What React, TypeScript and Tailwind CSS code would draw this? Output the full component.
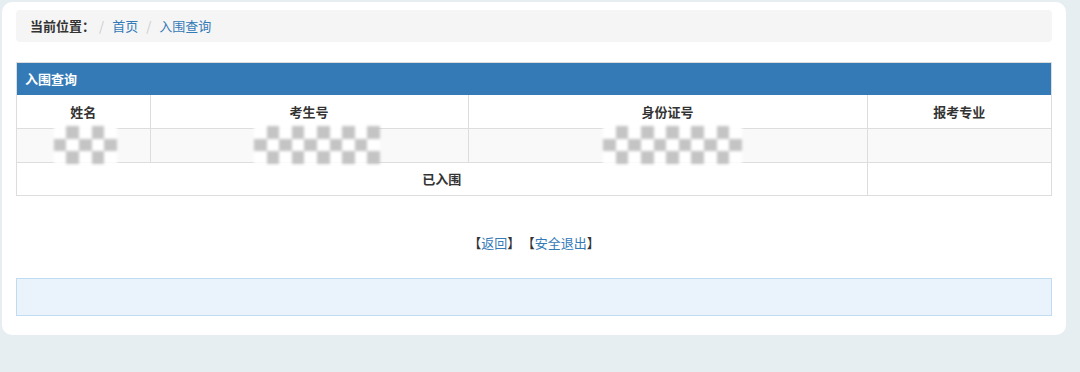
import React from 'react';

const font = { fontFamily: '"Noto Sans CJK SC", "Liberation Sans", sans-serif' };

function Masked({ cols, shift = 0 }: { cols: number; shift?: number }) {
  const rows = [0, 1, 2];
  return (
    <div className="inline-flex flex-col blur-[1.4px]" style={{ marginLeft: shift }}>
      {rows.map((r) => (
        <div key={r} className="flex">
          {Array.from({ length: cols }).map((_, c) => (
            <div
              key={c}
              className={(r + c) % 2 === 0 ? 'h-[12.5px] w-[12.6px] bg-white' : 'h-[12.5px] w-[12.6px] bg-[#c4c4c4]'}
            />
          ))}
        </div>
      ))}
    </div>
  );
}

export default function App() {
  return (
    <div className="h-[372px] w-[1080px] overflow-hidden bg-[#e6eef1] pt-[2px] pl-[2px] text-[13px] text-[#333]" style={font}>
      <div className="w-[1064px] rounded-[10px] bg-white px-[14px] pt-2 pb-[19px]">
        {/* breadcrumb */}
        <div className="flex h-8 items-center rounded bg-[#f5f5f5] px-[14px]">
          <span className="font-bold text-[#333]">当前位置：</span>
          <span className="pr-[8px] pl-[4px] text-[#ccc]">/</span>
          <a className="text-[#337ab7]">首页</a>
          <span className="px-[8px] text-[#ccc]">/</span>
          <a className="text-[#337ab7]">入围查询</a>
        </div>

        {/* result panel */}
        <div className="mt-5 border border-[#ddd]">
          <div className="flex h-[32px] items-center bg-[#337ab7] px-2 font-bold text-white">入围查询</div>
          <table className="w-full table-fixed border-collapse">
            <colgroup>
              <col className="w-[133px]" />
              <col className="w-[318px]" />
              <col className="w-[399px]" />
              <col />
            </colgroup>
            <tbody>
              <tr className="h-[33px]">
                <th className="border-r border-[#ddd] p-0 font-bold">姓名</th>
                <th className="border-r border-[#ddd] p-0 font-bold">考生号</th>
                <th className="border-r border-[#ddd] p-0 font-bold">身份证号</th>
                <th className="p-0 font-bold">报考专业</th>
              </tr>
              <tr className="h-[33px] border-t border-[#ddd] bg-[#f9f9f9]">
                <td className="border-r border-[#ddd] p-0 text-center">
                  <div className="flex h-[33px] items-center justify-center">
                    <Masked cols={5} shift={4} />
                  </div>
                </td>
                <td className="border-r border-[#ddd] p-0 text-center">
                  <div className="flex h-[33px] items-center justify-center">
                    <Masked cols={10} shift={16} />
                  </div>
                </td>
                <td className="border-r border-[#ddd] p-0 text-center">
                  <div className="flex h-[33px] items-center justify-center">
                    <Masked cols={11} shift={10} />
                  </div>
                </td>
                <td className="p-0" />
              </tr>
              <tr className="h-[33px] border-t border-[#ddd]">
                <td colSpan={3} className="border-r border-[#ddd] p-0 text-center font-bold">已入围</td>
                <td className="p-0" />
              </tr>
            </tbody>
          </table>
        </div>

        {/* actions */}
        <div className="mt-[37px] mb-[25px] h-5 text-center text-[13px] leading-5">
          <span>【</span>
          <a className="text-[#337ab7]">返回</a>
          <span>】</span>
          <span className="ml-[8px]">【</span>
          <a className="text-[#337ab7]">安全退出</a>
          <span>】</span>
        </div>

        <div className="h-[38px] border border-[#bfdcf0] bg-[#eaf3fb]" />
      </div>
    </div>
  );
}
